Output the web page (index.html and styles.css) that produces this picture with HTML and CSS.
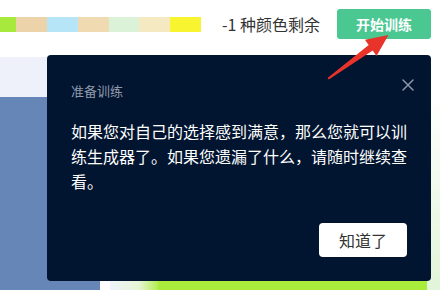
FILE: index.html
```html
<!DOCTYPE html>
<html lang="zh">
<head>
<meta charset="utf-8">
<link rel="stylesheet" href="styles.css">
</head>
<body>
<div class="screen">
  <header class="header">
    <div class="swatches">
      <span class="sw sw-lime sw-first"></span>
      <span class="sw sw-tan"></span>
      <span class="sw sw-blue"></span>
      <span class="sw sw-wheat"></span>
      <span class="sw sw-green"></span>
      <span class="sw sw-cream"></span>
      <span class="sw sw-yellow"></span>
    </div>
    <div class="remain">-1 种颜色剩余</div>
    <button class="start">开始训练</button>
  </header>
  <main class="main">
    <aside class="left">
      <div class="left-top"></div>
      <div class="left-blue"></div>
    </aside>
    <section class="work">
      <div class="canvas">
        <div class="canvas-main"></div>
        <div class="canvas-side"></div>
      </div>
      <div class="bottom-bar">
        <span class="bb-white"></span>
        <span class="bb-fade"></span>
        <span class="bb-lime"></span>
        <span class="bb-pale"></span>
      </div>
    </section>
  </main>

  <div class="popup">
    <div class="popup-head">
      <div class="popup-title">准备训练</div>
      <svg class="close" width="14" height="14" viewBox="0 0 14 14"><path d="M2 2 L12 12 M12 2 L2 12" stroke="#8c96a8" stroke-width="1.5" fill="none" stroke-linecap="round"/></svg>
    </div>
    <p class="popup-body">如果您对自己的选择感到满意，那么您就可以训练生成器了。如果您遗漏了什么，请随时继续查看。</p>
    <div class="popup-foot">
      <button class="ok">知道了</button>
    </div>
  </div>

  <svg class="arrow" width="440" height="290" viewBox="0 0 440 290">
    <polygon points="327.5,78 368.7,45 364.9,39.7 388.5,35 376.5,55.9 372.7,50.6 328.8,79.6" fill="#e8332a"/>
  </svg>
</div>
</body>
</html>
```

FILE: styles.css
```css
* { box-sizing: border-box; }
html, body { margin: 0; padding: 0; background: #fff; }
body { font-family: "Noto Sans CJK SC", "Noto Sans", sans-serif; }

.screen {
  position: relative;
  width: 440px;
  height: 290px;
  overflow: hidden;
  display: flex;
  flex-direction: column;
}

.header {
  height: 55px;
  flex: none;
  display: flex;
  align-items: flex-start;
  padding: 9px 9px 0 0;
}
.swatches { display: flex; margin-top: 8px; height: 15px; }
.sw { display: block; width: 31px; height: 15px; }
.sw-first { width: 16px; }
.sw-lime { background: #a8e93d; }
.sw-tan { background: #edd3a9; }
.sw-blue { background: #b5e5f6; }
.sw-wheat { background: #efdab1; }
.sw-green { background: #dcf2d8; width: 30px; }
.sw-cream { background: #f4e9c1; }
.sw-yellow { background: #f8f530; }

.remain {
  margin-left: auto;
  font-size: 16px;
  line-height: 30px;
  color: #333;
  margin-right: 17px;
}
.start {
  width: 94px;
  height: 30px;
  border: none;
  border-radius: 3px;
  background: #4bc792;
  color: #fff;
  font-family: inherit;
  font-weight: bold;
  font-size: 14px;
  padding: 0;
}

.main { flex: 1; display: flex; }
.left { width: 100px; display: flex; flex-direction: column; }
.left-top { margin-top: 2px; height: 40px; background: #eef1fa; }
.left-blue { flex: 1; background: #6686b8; }
.work { flex: 1; display: flex; flex-direction: column; }
.canvas { flex: 1; display: flex; }
.canvas-main { flex: 1; background: #fff; }
.canvas-side { width: 13px; background: linear-gradient(to bottom, #fff 0, #fff 40px, #e2f5d9 100%); }
.bottom-bar { height: 9px; display: flex; }
.bb-white { width: 10px; background: #fff; }
.bb-fade { width: 48px; background: linear-gradient(to right, #eef3fb, #e6f6d6 60%, #b5ec55); }
.bb-lime { flex: 1; background: #a9ec3b; }
.bb-pale { width: 13px; background: #e2f5da; }

.popup {
  position: absolute;
  left: 47px;
  top: 55px;
  width: 384px;
  height: 226px;
  background: #021530;
  border-radius: 4px;
  padding: 22px 24px 24px 24px;
  display: flex;
  flex-direction: column;
}
.popup-head { display: flex; align-items: center; justify-content: space-between; height: 24px; }
.popup-title { font-size: 13px; color: #8e99ab; line-height: 24px; margin-top: 3px; }
.close { margin-right: -8px; margin-top: -8px; }
.popup-body {
  margin: 18px 0 0 0;
  font-size: 16px;
  line-height: 25px;
  color: #fff;
}
.popup-foot { margin-top: auto; display: flex; justify-content: flex-end; }
.ok {
  width: 88px;
  height: 34px;
  border: none;
  border-radius: 4px;
  background: #fff;
  color: #333;
  font-family: inherit;
  font-size: 16px;
  padding: 0;
}

.arrow { position: absolute; left: 0; top: 0; pointer-events: none; }
```
